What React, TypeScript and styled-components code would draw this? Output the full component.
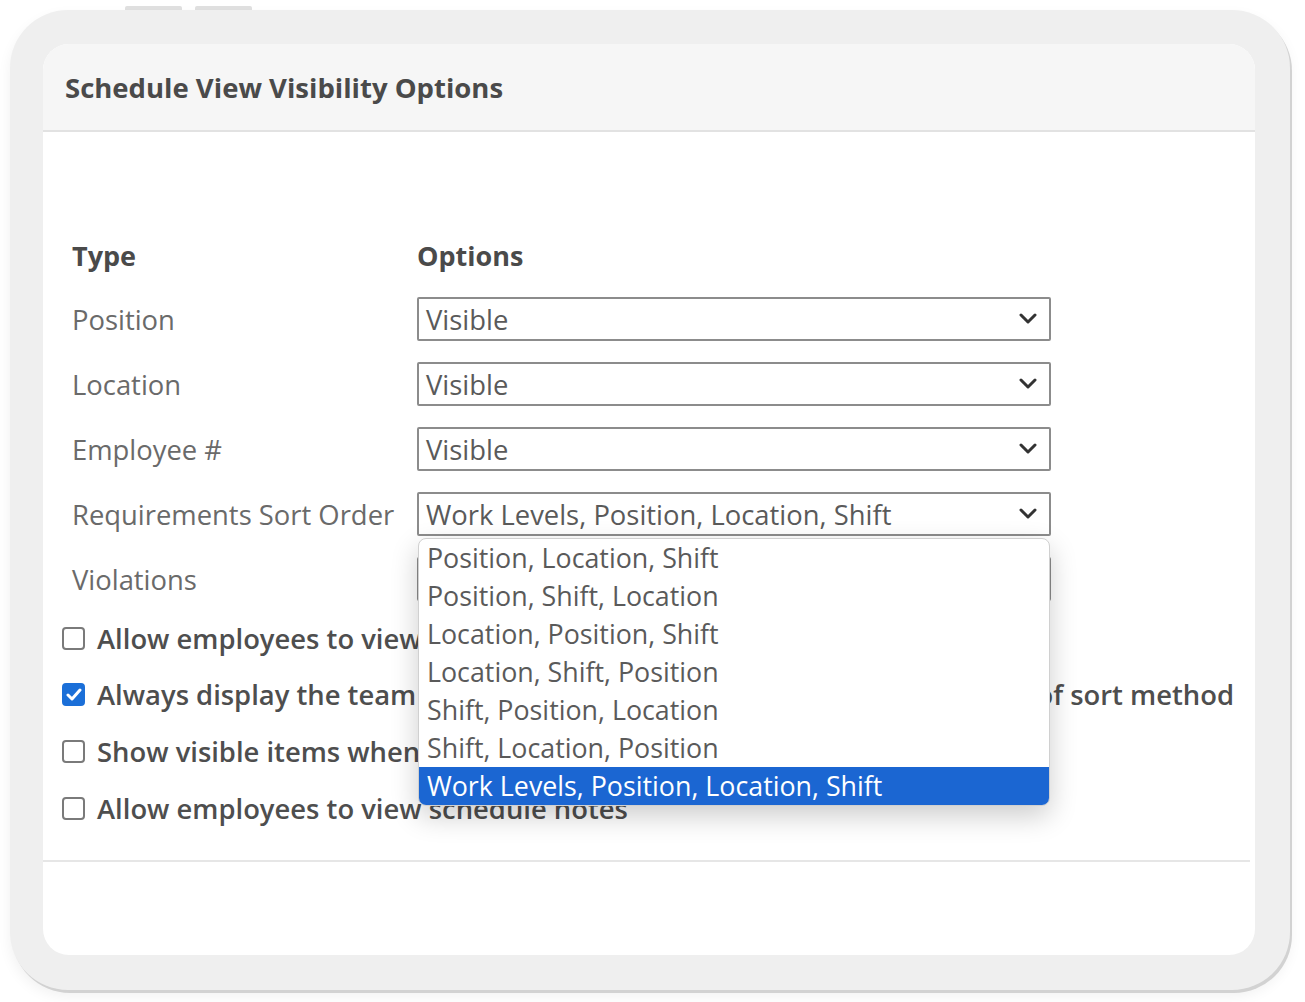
import React from 'react'
import styled, { createGlobalStyle } from 'styled-components'

const GlobalStyle = createGlobalStyle`
  html, body {
    margin: 0;
    padding: 0;
    background: #fff;
  }
  body {
    font-family: 'Open Sans', 'Noto Sans', sans-serif;
  }
`

const Page = styled.div`
  width: 1305px;
  height: 1002px;
  box-sizing: border-box;
  padding: 0 15px 12px 10px;
  display: flex;
  flex-direction: column;
`

const Tabs = styled.div`
  display: flex;
  align-items: flex-end;
  gap: 13px;
  height: 10px;
  padding-left: 115px;
`

const Tab = styled.span`
  width: 57px;
  height: 4px;
  background: #e0e0e0;
  border-radius: 2px 2px 0 0;
`

const Device = styled.div`
  flex: 1;
  display: flex;
  padding: 34px 35px 35px 33px;
  background: #efefef;
  border-radius: 58px;
  box-shadow: 2px 3px 0 #d2d2d2, 0 6px 14px rgba(0, 0, 0, 0.06);
`

const Screen = styled.div`
  flex: 1;
  display: flex;
  flex-direction: column;
  background: #fff;
  border-radius: 26px;
  overflow: hidden;
`

const Header = styled.div`
  height: 86px;
  display: flex;
  align-items: center;
  padding-left: 22px;
  background: #f6f6f6;
  border-bottom: 2px solid #e2e2e2;
`

const Title = styled.h1`
  margin: 0;
  font-size: 27.5px;
  font-weight: 700;
  color: #4a4a4a;
`

const Body = styled.div`
  display: flex;
  flex-direction: column;
`

const OptionsGrid = styled.div`
  display: grid;
  grid-template-columns: 345px 634px;
  row-gap: 21px;
  align-items: center;
  margin: 104px 0 0 29px;
`

const ColHead = styled.div`
  height: 40px;
  line-height: 40px;
  font-size: 27px;
  font-weight: 700;
  color: #4a4a4a;
`

const Label = styled.div`
  font-size: 27.4px;
  color: #6a6a6a;
`

const SelectWrap = styled.div`
  position: relative;
`

const SelectBox = styled.div`
  height: 44px;
  box-sizing: border-box;
  display: flex;
  align-items: center;
  justify-content: space-between;
  padding: 0 12px 0 7px;
  border: 2px solid #8c8c8c;
  border-radius: 2px;
  font-size: 27.4px;
  color: #5a5a5a;
  background: #fff;
`

const Menu = styled.ul`
  position: absolute;
  z-index: 2;
  top: calc(100% + 2px);
  left: 1px;
  right: 1px;
  margin: 0;
  padding: 0;
  list-style: none;
  background: #fff;
  border: 1px solid #d0d0d0;
  border-radius: 8px;
  overflow: hidden;
  box-shadow: 0 10px 28px rgba(0, 0, 0, 0.2);
`

const MenuItem = styled.li<{ $selected?: boolean }>`
  height: 38px;
  line-height: 38px;
  padding-left: 8px;
  font-size: 26.8px;
  color: ${(p) => (p.$selected ? '#fff' : '#5a5a5a')};
  background: ${(p) => (p.$selected ? '#1b66d2' : 'transparent')};
`

const Checks = styled.div`
  display: flex;
  flex-direction: column;
  gap: 16.7px;
  margin: 17px 0 0 19px;
`

const CheckRow = styled.label`
  height: 40px;
  display: flex;
  align-items: center;
  gap: 12px;
  font-size: 27.4px;
  font-weight: 600;
  color: #4e4e4e;
  white-space: nowrap;
`

const Box = styled.span<{ $checked?: boolean }>`
  width: 23px;
  height: 23px;
  box-sizing: border-box;
  display: flex;
  align-items: center;
  justify-content: center;
  border-radius: 4px;
  border: 2px solid ${(p) => (p.$checked ? '#1b6fd8' : '#7a7a7a')};
  background: ${(p) => (p.$checked ? '#1b6fd8' : '#fff')};
`

const Divider = styled.div`
  height: 2px;
  margin: 32px 5px 0 0;
  background: #e6e6e6;
`

const Chevron = () => (
  <svg width="18" height="12" viewBox="0 0 18 12">
    <polyline points="2,2 9,9 16,2" fill="none" stroke="#333" strokeWidth="3" strokeLinecap="round" strokeLinejoin="round" />
  </svg>
)

const Tick = () => (
  <svg width="16" height="14" viewBox="0 0 16 14">
    <polyline points="2,7 6,11 14,2" fill="none" stroke="#fff" strokeWidth="3" strokeLinecap="round" strokeLinejoin="round" />
  </svg>
)

const sortOptions = [
  'Position, Location, Shift',
  'Position, Shift, Location',
  'Location, Position, Shift',
  'Location, Shift, Position',
  'Shift, Position, Location',
  'Shift, Location, Position',
  'Work Levels, Position, Location, Shift',
]

const Select = ({ value, children }: { value: string; children?: React.ReactNode }) => (
  <SelectWrap>
    <SelectBox>
      <span>{value}</span>
      <Chevron />
    </SelectBox>
    {children}
  </SelectWrap>
)

const checks = [
  { text: 'Allow employees to view the full schedule for their team', checked: false },
  { text: 'Always display the team requirements in the selected order regardless of sort method', checked: true },
  { text: 'Show visible items when printing the schedule', checked: false },
  { text: 'Allow employees to view schedule notes', checked: false },
]

export default function App() {
  const selected = sortOptions[sortOptions.length - 1]
  return (
    <Page>
      <GlobalStyle />
      <Tabs>
        <Tab />
        <Tab />
      </Tabs>
      <Device>
        <Screen>
          <Header>
            <Title>Schedule View Visibility Options</Title>
          </Header>
          <Body>
            <OptionsGrid>
              <ColHead>Type</ColHead>
              <ColHead>Options</ColHead>
              <Label>Position</Label>
              <Select value="Visible" />
              <Label>Location</Label>
              <Select value="Visible" />
              <Label>Employee #</Label>
              <Select value="Visible" />
              <Label>Requirements Sort Order</Label>
              <Select value={selected}>
                <Menu>
                  {sortOptions.map((o) => (
                    <MenuItem key={o} $selected={o === selected}>
                      {o}
                    </MenuItem>
                  ))}
                </Menu>
              </Select>
              <Label>Violations</Label>
              <Select value="Visible" />
            </OptionsGrid>
            <Checks>
              {checks.map((c) => (
                <CheckRow key={c.text}>
                  <Box $checked={c.checked}>{c.checked && <Tick />}</Box>
                  {c.text}
                </CheckRow>
              ))}
            </Checks>
            <Divider />
          </Body>
        </Screen>
      </Device>
    </Page>
  )
}
